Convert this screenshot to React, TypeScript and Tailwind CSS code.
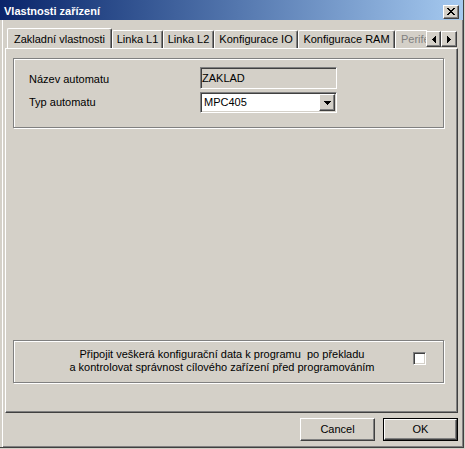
import React from "react";

// Win2000 style bevels
const raised =
  "border border-t-white border-l-white border-r-[#404040] border-b-[#404040] shadow-[inset_-1px_-1px_0_#808080]";
const sunken =
  "border border-t-[#808080] border-l-[#808080] border-r-white border-b-white shadow-[inset_1px_1px_0_#404040,inset_-1px_-1px_0_#d4d0c8]";
const etched = "border border-[#808080] shadow-[inset_1px_1px_0_#fff,1px_1px_0_#fff]";

const CloseGlyph = () => (
  <svg width="8" height="7" viewBox="0 0 8 7" shapeRendering="crispEdges">
    <path d="M0 0h2v1H0zM6 0h2v1H6zM1 1h2v1H1zM5 1h2v1H5zM2 2h4v1H2zM3 3h2v1H3zM2 4h4v1H2zM1 5h2v1H1zM5 5h2v1H5zM0 6h2v1H0zM6 6h2v1H6z" fill="#000" />
  </svg>
);

const Arrow = ({ dir }: { dir: "left" | "right" | "down" }) => {
  if (dir === "down")
    return (
      <svg width="7" height="4" viewBox="0 0 7 4" shapeRendering="crispEdges">
        <path d="M0 0h7v1H0zM1 1h5v1H1zM2 2h3v1H2zM3 3h1v1H3z" fill="#000" />
      </svg>
    );
  const d =
    dir === "left"
      ? "M3 0h1v7H3zM2 1h1v5H2zM1 2h1v3H1zM0 3h1v1H0z"
      : "M0 0h1v7H0zM1 1h1v5H1zM2 2h1v3H2zM3 3h1v1H3z";
  return (
    <svg width="4" height="7" viewBox="0 0 4 7" shapeRendering="crispEdges">
      <path d={d} fill="#000" />
    </svg>
  );
};

const tabs = [
  { label: "Linka L1", w: "w-[51px]" },
  { label: "Linka L2", w: "w-[51px]" },
  { label: "Konfigurace IO", w: "w-[84px]" },
  { label: "Konfigurace RAM", w: "w-[97px]" },
];

export default function App() {
  return (
    <div className="w-[465px] h-[449px] bg-[#d4d0c8] font-['Liberation_Sans',Arial,sans-serif] text-[11px] leading-[13px] text-black">
      <div className="w-[464px] h-[448px] flex flex-col border-r border-b border-r-[#404040] border-b-[#404040]">
        {/* title bar */}
        <div className="h-[20px] flex items-center pt-[3px] pl-[4px] pr-[4px] bg-gradient-to-r from-[#0a246a] to-[#a6caf0]">
          <span className="flex-1 text-white font-bold">Vlastnosti zařízení</span>
          <button className={`w-[16px] h-[14px] flex items-center justify-center bg-[#d4d0c8] ${raised}`}>
            <CloseGlyph />
          </button>
        </div>

        <div className="flex-1 flex flex-col ml-[2px] border-l border-white pl-[2px] pr-[5px] pt-[8px] pb-[6px] shadow-[inset_-1px_-1px_0_#808080]">
          {/* tab strip */}
          <div className="relative h-[20px] flex items-end pl-[2px]">
            <div className="flex items-end w-[420px] h-full overflow-hidden whitespace-nowrap">
              <div className="relative z-10 shrink-0 w-[105px] h-[21px] -mb-px flex items-end justify-center pb-[3px] bg-[#d4d0c8] border-t border-l border-r border-t-white border-l-white border-r-[#404040] rounded-t-[2px] shadow-[inset_-1px_0_0_#808080]">
                Zakladní vlastnosti
              </div>
              {tabs.map((t) => (
                <div
                  key={t.label}
                  className={`${t.w} shrink-0 h-[18px] flex items-end justify-center pb-[2px] border-t border-l border-r border-t-white border-l-white border-r-[#404040] rounded-t-[2px] shadow-[inset_-1px_0_0_#808080]`}
                >
                  {t.label}
                </div>
              ))}
              <div className="w-[60px] shrink-0 h-[18px] flex items-end pl-[5px] pb-[2px] border-t border-l border-t-white border-l-white rounded-tl-[2px] text-[#808080]">
                Periferie
              </div>
            </div>
            <div className="absolute right-[1px] top-[3px] flex">
              <button className={`w-[15px] h-[16px] flex items-center justify-center bg-[#d4d0c8] ${raised}`}>
                <Arrow dir="left" />
              </button>
              <button className={`w-[16px] h-[16px] flex items-center justify-center bg-[#d4d0c8] ${raised}`}>
                <Arrow dir="right" />
              </button>
            </div>
          </div>

          {/* tab panel */}
          <div className={`flex-1 flex flex-col ${raised}`}>
            <div className={`mt-[9px] ml-[7px] w-[431px] h-[70px] pt-[8px] pl-[15px] ${etched}`}>
              <div className="grid grid-cols-[171px_137px] gap-y-[3px] items-center">
                <span className="pt-[2px]">Název automatu</span>
                <div className={`h-[22px] flex items-center pl-[1px] bg-[#d4d0c8] ${sunken}`}>ZAKLAD</div>
                <span>Typ automatu</span>
                <div className={`h-[21px] flex items-stretch bg-white p-[1px] ${sunken}`}>
                  <span className="flex-1 flex items-center pl-[2px]">MPC405</span>
                  <div className={`w-[16px] flex items-center justify-center bg-[#d4d0c8] ${raised}`}>
                    <Arrow dir="down" />
                  </div>
                </div>
              </div>
            </div>

            <div className={`mt-auto mb-[29px] ml-[7px] w-[431px] h-[43px] flex items-start pt-[7px] pl-[18px] ${etched}`}>
              <div className="w-[380px] text-center">
                <div className="whitespace-pre">Připojit veškerá konfigurační data k programu  po překladu</div>
                <div>a kontrolovat správnost cílového zařízení před programováním</div>
              </div>
              <div className={`ml-[1px] mt-[4px] w-[13px] h-[13px] bg-white ${sunken}`} />
            </div>
          </div>

          {/* buttons */}
          <div className="mt-[5px] flex justify-end gap-[8px]">
            <button className={`w-[75px] h-[23px] bg-[#d4d0c8] ${raised}`}>Cancel</button>
            <button className="w-[75px] h-[23px] bg-[#d4d0c8] border border-black">
              <div className={`w-full h-full flex items-center justify-center ${raised}`}>OK</div>
            </button>
          </div>
        </div>
      </div>
    </div>
  );
}
